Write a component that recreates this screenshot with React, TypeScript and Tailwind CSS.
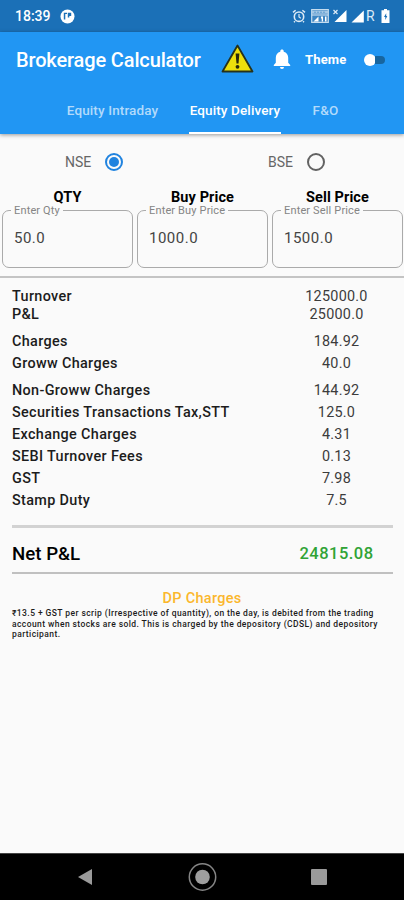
import { useState } from 'react';

const TABS = [
  { label: 'Equity Intraday', className: 'ml-[66px] w-[93px]' },
  { label: 'Equity Delivery', className: 'ml-[30px] w-[92px]' },
  { label: 'F&O', className: 'ml-[31px] w-[27px]' },
];

const FIELDS = [
  { title: 'QTY', label: 'Enter Qty', value: '50.0' },
  { title: 'Buy Price', label: 'Enter Buy Price', value: '1000.0' },
  { title: 'Sell Price', label: 'Enter Sell Price', value: '1500.0' },
];

const GROUPS = [
  {
    row: 'h-[18px]',
    rows: [
      ['Turnover', '125000.0'],
      ['P&L', '25000.0'],
    ],
  },
  {
    row: 'h-[22px]',
    rows: [
      ['Charges', '184.92'],
      ['Groww Charges', '40.0'],
    ],
  },
  {
    row: 'h-[22px]',
    rows: [
      ['Non-Groww Charges', '144.92'],
      ['Securities Transactions Tax,STT', '125.0'],
      ['Exchange Charges', '4.31'],
      ['SEBI Turnover Fees', '0.13'],
      ['GST', '7.98'],
      ['Stamp Duty', '7.5'],
    ],
  },
];

function StatusBar() {
  return (
    <div className="flex h-8 items-center bg-[#1b70b7] pl-[15px] text-white">
      <span className="w-[36px] pt-[1px] text-[14px] font-medium whitespace-nowrap">18:39</span>
      <svg className="ml-[9px]" width="15" height="15" viewBox="0 0 15 15">
        <circle cx="7.5" cy="7.5" r="7" fill="#fff" />
        <path d="M3.8 3.7h3.2v1.3H5.3v5.5H3.8zM7.8 3.7h3.4v3.3H9.3v1.600H7.800z" fill="#1b70b7" />
      </svg>
      <svg className="ml-[217px]" width="14" height="14" viewBox="0 0 14 14" fill="none" stroke="#dceaf6">
        <circle cx="7" cy="7.7" r="4.7" strokeWidth="1.6" />
        <path d="M1 3.4 3.6 1.2M13 3.4 10.4 1.2M3 12.2 2 13.2M11 12.2l1 1" strokeWidth="1.5" />
        <path d="M7 5v3l1.8 1.2" strokeWidth="1.2" />
      </svg>
      <svg className="ml-[5px]" width="18" height="14" viewBox="0 0 18 14">
        <path d="M.7.7h16.6v12.6H.7z" fill="#3e86c3" stroke="#c5dcef" strokeWidth="1.2" />
        <path d="M1 3.2h16" stroke="#a5c8e5" strokeWidth="3" />
        <path d="M3 3.2h12" stroke="#5c9bd0" strokeDasharray="2 1" />
        <path d="M1 6h16" stroke="#dceaf6" />
        <path d="M2.5 12.5l5-5v5zM10 9.500V7.500h2v5h-1.300v-3zM14 7.500h1.500v5H14z" fill="#fff" />
      </svg>
      <svg className="ml-[4px]" width="14" height="14" viewBox="0 0 14 14">
        <path d="M13.5 1v12H1.5z" fill="#fff" />
        <path d="m.5 1 4 4M4.5 1l-4 4" stroke="#dceaf6" strokeWidth="1.2" />
      </svg>
      <svg className="ml-[4px]" width="13" height="13" viewBox="0 0 13 13">
        <path d="M12.8.5v12H.5z" fill="#fff" />
      </svg>
      <span className="ml-[2px] w-[9px] text-[14px] text-[#dceaf6]">R</span>
      <svg className="ml-[6px]" width="9" height="14" viewBox="0 0 9 14">
        <path d="M3 0h3v1.3h2.5V14h-8V1.3H3z" fill="#fff" />
        <path d="M5.2 4.3 3 8h1.3v2.9L6.3 7H5.2z" fill="#1b70b7" />
      </svg>
    </div>
  );
}

function AppBar() {
  const [active, setActive] = useState(1);
  const [dark, setDark] = useState(false);

  return (
    <header className="h-[102px] bg-[#2196f3] text-white shadow-[0_1px_4px_rgba(0,0,0,0.4)]">
      <div className="flex h-[55px] items-center pl-[16px]">
        <h1 className="w-[186px] text-[20px] font-medium tracking-[-0.14px] whitespace-nowrap">
          Brokerage Calculator
        </h1>
        <svg className="mt-[-3px] ml-[19px]" width="33" height="29" viewBox="0 0 33 29">
          <path d="M16.5 1.5 31.5 27.5h-30z" fill="#ecdf0c" stroke="#26321c" strokeWidth="1.8" strokeLinejoin="round" />
          <path d="M14.6 9.5h3.8l-.9 10h-2z" fill="#26270c" />
          <circle cx="16.5" cy="22.8" r="1.9" fill="#26270c" />
        </svg>
        <svg className="ml-[19px]" width="18" height="21" viewBox="0 0 18 21" fill="#fff">
          <path d="M9 .5c-1 0-1.7.7-1.7 1.6v.7C4.4 3.5 2.8 5.9 2.8 8.8v5L.8 16v1h16.4v-1l-2-2.2v-5c0-2.900-1.600-5.300-4.500-6V2.100C10.7 1.200 10 .5 9 .5zM7 18.100a2 2 0 0 0 4 0z" />
        </svg>
        <span className="ml-[14px] w-[42px] text-[13px] font-bold tracking-[0.15px] whitespace-nowrap">Theme</span>
        <button
          onClick={() => setDark(!dark)}
          className="ml-[17px] flex h-[12px] w-[21px] items-center rounded-full"
          aria-label="Theme"
        >
          <span className="size-[12px] shrink-0 rounded-full bg-white" />
          <span className="ml-[-1px] h-[8px] w-[10px] rounded-r-full bg-[#17659f]" />
        </button>
      </div>
      <nav className="flex h-[47px]">
        {TABS.map((tab, i) => (
          <button
            key={tab.label}
            onClick={() => setActive(i)}
            className={`flex items-center justify-center border-b-[2px] pt-[2px] text-[13.5px] font-medium tracking-[0.12px] whitespace-nowrap ${tab.className} ${
              active === i ? 'border-white text-white' : 'border-transparent text-[#b2dafb]'
            }`}
          >
            {tab.label}
          </button>
        ))}
      </nav>
    </header>
  );
}

function Radio({ checked }: { checked: boolean }) {
  return (
    <span
      className={`flex size-[18px] items-center justify-center rounded-full border-2 ${
        checked ? 'border-[#2083df]' : 'border-[#626262]'
      }`}
    >
      {checked && <span className="size-[10px] rounded-full bg-[#2083df]" />}
    </span>
  );
}

export default function App() {
  const [exchange, setExchange] = useState('NSE');

  return (
    <div className="flex h-[900px] w-[404px] flex-col overflow-hidden bg-[#fafafa] font-['Roboto',sans-serif] text-[#1c1c1c]">
      <StatusBar />
      <AppBar />

      <div className="flex h-[56px] items-center text-[14px] text-[#666]">
        <button className="ml-[65px] flex items-center" onClick={() => setExchange('NSE')}>
          <span className="mr-[13px] w-[27px] text-left">NSE</span>
          <Radio checked={exchange === 'NSE'} />
        </button>
        <button className="ml-[145px] flex items-center" onClick={() => setExchange('BSE')}>
          <span className="mr-[12px] w-[27px] text-left">BSE</span>
          <Radio checked={exchange === 'BSE'} />
        </button>
      </div>

      <div className="flex gap-[4px] pt-[1px] pl-[2px]">
        {FIELDS.map((field) => (
          <div key={field.title} className="w-[131px]">
            <p className="mb-[1px] h-[13px] text-center text-[14.5px] leading-[13px] font-bold tracking-[0.1px] text-black">{field.title}</p>
            <fieldset className="h-[63px] rounded-[7px] border border-[#aaa] pl-[8px]">
              <legend className="px-[3px] text-[11px] leading-[11px] tracking-[0.15px] text-[#858585]">{field.label}</legend>
              <p className="mt-[13px] ml-[3px] text-[15px] leading-[18px] tracking-[0.5px] text-[#444]">{field.value}</p>
            </fieldset>
          </div>
        ))}
      </div>
      <div className="mt-[8px] h-[2px] shrink-0 bg-[#c4c4c4]" />

      <div className="mt-[10px] flex flex-col gap-[7px] text-[14.4px]">
        {GROUPS.map((group, i) => (
          <div key={i} className={i === 1 ? '-mb-[2px]' : ''}>
            {group.rows.map(([label, value]) => (
              <div key={label} className={`flex items-center pl-[12px] ${group.row}`}>
                <span className="w-[259px] font-medium tracking-[0.35px]">{label}</span>
                <span className="w-[131px] text-center tracking-[0.25px] text-[#3c3c3c]">{value}</span>
              </div>
            ))}
          </div>
        ))}
      </div>

      <div className="mx-[12px] mt-[13px] mr-[11px] h-[3px] shrink-0 bg-[#d2d2d2]" />
      <div className="flex h-[44px] items-center pt-[9px] pl-[12px]">
        <span className="w-[259px] text-[18.7px] font-medium text-black">Net P&L</span>
        <span className="w-[131px] text-center text-[16.5px] font-medium tracking-[0.5px] text-[#30a335]">24815.08</span>
      </div>
      <div className="mx-[12px] mr-[11px] h-[2px] shrink-0 bg-[#c0c0c0]" />

      <h2 className="mt-[17px] text-center text-[14.5px] leading-[16px] font-medium tracking-[0.3px] text-[#fbb72c]">DP Charges</h2>
      <div className="mt-[1px] pl-[12px] text-[8.5px] leading-[10.5px] font-medium tracking-[0.42px] whitespace-nowrap">
        <p>₹13.5 + GST per scrip (Irrespective of quantity), on the day, is debited from the trading</p>
        <p>account when stocks are sold. This is charged by the depository (CDSL) and depository</p>
        <p>participant.</p>
      </div>

      <footer className="mt-auto flex h-[47px] shrink-0 items-center border-t border-[#444] bg-black">
        <svg className="ml-[77px]" width="16" height="18" viewBox="0 0 16 18">
          <path d="M15 1v16L1 9z" fill="#9a9a9a" />
        </svg>
        <svg className="ml-[95px]" width="30" height="30" viewBox="0 0 30 30">
          <circle cx="14.5" cy="15" r="13.2" fill="none" stroke="#858585" strokeWidth="1.5" />
          <circle cx="14.5" cy="15" r="7.3" fill="#9e9e9e" />
        </svg>
        <span className="ml-[93px] size-[16px] rounded-[1px] bg-[#9a9a9a]" />
      </footer>
    </div>
  );
}
